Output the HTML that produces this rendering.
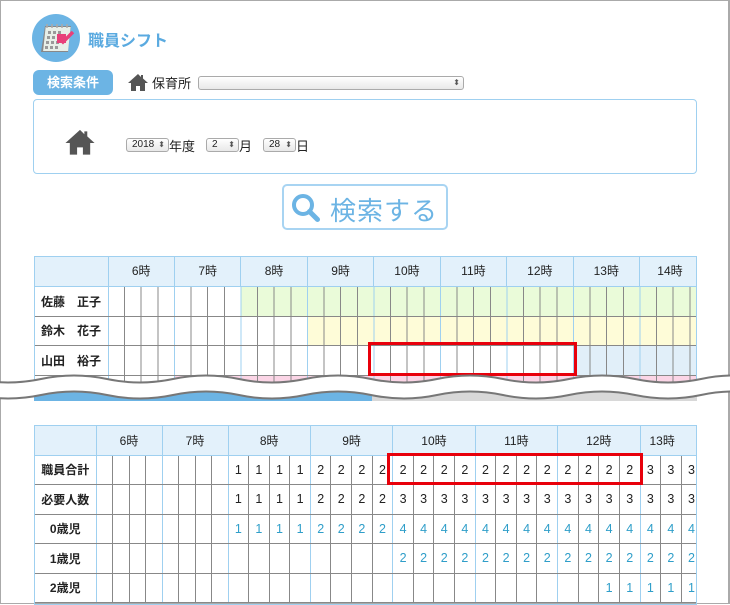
<!DOCTYPE html>
<html><head><meta charset="utf-8">
<style>
*{margin:0;padding:0;box-sizing:border-box}
body{width:730px;height:605px;background:#fff;font-family:"Liberation Sans","Noto Sans CJK JP",sans-serif;position:relative;overflow:hidden;color:#222}
.frame{position:absolute;left:0;top:0;width:730px;height:604px;border:1px solid #aaa;border-right:2px solid #aaa}
.abs{position:absolute}
.sel{position:absolute;height:14px;border:1px solid #aaa;border-radius:3px;background:linear-gradient(#fff,#e8e8e8);font-size:10px;line-height:12px;padding-left:5px;color:#222}
.sel:after{content:"⬍";position:absolute;right:3px;top:0;font-size:8px;color:#555}
table{border-collapse:collapse;table-layout:fixed}
.wrap{position:absolute;overflow:hidden;border:1px solid #9fd0f0}
th{background:#e3f1fb;font-weight:normal;font-size:12px;border-right:1px solid #9fd0f0;border-bottom:1px solid #9fd0f0;color:#222;height:29px}
td{border-bottom:1px solid #888;font-size:12.5px;text-align:center;height:29.5px}
td.n{font-weight:bold;font-size:12px;border-right:1px solid #9fd0f0}
.top td.n{text-align:left;padding-left:6px;letter-spacing:0}
.g{background:
 repeating-linear-gradient(to right,transparent 0 65.5px,#9fd0f0 65.5px 66.5px),
 repeating-linear-gradient(to right,transparent 0 15.6px,#888 15.6px 16.625px)}
.bt td.c{border-right:1px solid #888}
.bt td.h{border-right:1px solid #9fd0f0}
.b{color:#2f9ec9}
</style></head><body>
<div class="frame"></div>

<svg class="abs" style="left:32px;top:14px" width="48" height="48" viewBox="0 0 48 48">
<circle cx="24" cy="24" r="24" fill="#6cb4e4"/>
<polygon points="9,38 13,12 39,12 36,38" fill="#888"/>
<rect x="12" y="13" width="25" height="24" fill="#e8efe8" transform="skewX(-6) translate(3 0)"/>
<g fill="#9a9a9a">
<rect x="16" y="17" width="3" height="3"/><rect x="21" y="17" width="3" height="3"/><rect x="26" y="17" width="3" height="3"/>
<rect x="15" y="22" width="3" height="3"/><rect x="20" y="22" width="3" height="3"/>
<rect x="14" y="27" width="3" height="3"/><rect x="19" y="27" width="3" height="3"/><rect x="24" y="27" width="3" height="3"/>
<rect x="13" y="32" width="3" height="3"/><rect x="18" y="32" width="3" height="3"/><rect x="23" y="32" width="3" height="3"/>
</g>
<path d="M15 10v4M20 10v4M25 10v4M30 10v4M35 10v4" stroke="#aaa" stroke-width="1.5"/>
<rect x="25" y="20" width="9" height="9" fill="#e8407a"/>
<path d="M27 24l4 4 10-10" stroke="#e8407a" stroke-width="3.5" fill="none"/>
</svg>
<div class="abs" style="left:88px;top:27px;font-size:16px;font-weight:bold;color:#5aaae0">職員シフト</div>

<div class="abs" style="left:33px;top:70px;width:80px;height:25px;background:#6cb4e4;border-radius:6px;color:#fff;font-weight:bold;font-size:13px;text-align:center;line-height:25px">検索条件</div>
<svg class="abs" style="left:127px;top:73px" width="22" height="18" viewBox="0 0 22 18"><path d="M11 1L1 10h3v8h5v-5h4v5h5v-8h3L16 5.5V2h-2v2z" fill="#555"/></svg>
<div class="abs" style="left:152px;top:73px;font-size:13px">保育所</div>
<div class="sel" style="left:198px;top:76px;width:266px"></div>

<div class="abs" style="left:33px;top:99px;width:664px;height:75px;border:1px solid #9fd0f0;border-radius:4px"></div>
<svg class="abs" style="left:64px;top:128px" width="32" height="27" viewBox="0 0 22 18"><path d="M11 1L1 10h3v8h5v-5h4v5h5v-8h3L16 5.5V2h-2v2z" fill="#555"/></svg>
<div class="sel" style="left:126px;top:138px;width:43px">2018</div>
<div class="abs" style="left:169px;top:136px;font-size:13px">年度</div>
<div class="sel" style="left:206px;top:138px;width:33px">2</div>
<div class="abs" style="left:239px;top:136px;font-size:13px">月</div>
<div class="sel" style="left:263px;top:138px;width:33px">28</div>
<div class="abs" style="left:296px;top:136px;font-size:13px">日</div>

<div class="abs" style="left:282px;top:184px;width:166px;height:46px;border:2px solid #a8d4f2;border-radius:5px"></div>
<svg class="abs" style="left:290px;top:192px" width="32" height="32" viewBox="0 0 32 32"><circle cx="13" cy="13" r="9" stroke="#6cb4e4" stroke-width="4" fill="none"/><path d="M19.5 19.5l8 8" stroke="#6cb4e4" stroke-width="5" stroke-linecap="round"/></svg>
<div class="abs" style="left:330px;top:191px;font-size:26px;color:#6cb4e4;letter-spacing:1px">検索する</div>

<!-- top table -->
<div class="wrap top" style="left:34px;top:256px;width:663px;height:145px">
<table style="width:665px">
<colgroup><col style="width:73px"><col style="width:592px"></colgroup>
<tr><th></th><th style="padding:0;border-right:0"><div style="display:flex">
<div style="width:66.5px;border-right:1px solid #9fd0f0;line-height:29px">6時</div><div style="width:66.5px;border-right:1px solid #9fd0f0;line-height:29px">7時</div><div style="width:66.5px;border-right:1px solid #9fd0f0;line-height:29px">8時</div><div style="width:66.5px;border-right:1px solid #9fd0f0;line-height:29px">9時</div><div style="width:66.5px;border-right:1px solid #9fd0f0;line-height:29px">10時</div><div style="width:66.5px;border-right:1px solid #9fd0f0;line-height:29px">11時</div><div style="width:66.5px;border-right:1px solid #9fd0f0;line-height:29px">12時</div><div style="width:66.5px;border-right:1px solid #9fd0f0;line-height:29px">13時</div><div style="width:60px;line-height:29px">14時</div></div></th></tr>
<tr><td class="n">佐藤　正子</td><td class="g" style="background-image:repeating-linear-gradient(to right,transparent 0 65.5px,#9fd0f0 65.5px 66.5px),repeating-linear-gradient(to right,transparent 0 15.6px,#888 15.6px 16.625px),linear-gradient(to right,#fff 133px,#eafbd9 133px)"></td></tr>
<tr><td class="n">鈴木　花子</td><td class="g" style="background-image:repeating-linear-gradient(to right,transparent 0 65.5px,#9fd0f0 65.5px 66.5px),repeating-linear-gradient(to right,transparent 0 15.6px,#888 15.6px 16.625px),linear-gradient(to right,#fff 199px,#fefcd8 199px)"></td></tr>
<tr><td class="n">山田　裕子</td><td class="g" style="background-image:repeating-linear-gradient(to right,transparent 0 65.5px,#9fd0f0 65.5px 66.5px),repeating-linear-gradient(to right,transparent 0 15.6px,#888 15.6px 16.625px),linear-gradient(to right,#fff 465px,#e1eff9 465px)"></td></tr>
<tr><td class="n"></td><td class="g" style="background-image:repeating-linear-gradient(to right,transparent 0 65.5px,#9fd0f0 65.5px 66.5px),repeating-linear-gradient(to right,transparent 0 15.6px,#888 15.6px 16.625px),linear-gradient(to right,#fff 66px,#fbd5e6 66px)"></td></tr>
</table>
</div>
<div class="abs" style="left:368px;top:342px;width:209px;height:34px;border:3px solid #e8000b"></div>
<svg class="abs" style="left:0;top:368px" width="730" height="34" viewBox="0 368 730 34">
<rect x="34" y="392" width="338" height="9" fill="#6cb4e4"/>
<rect x="372" y="392" width="325" height="9" fill="#d8d8d8"/>
<path d="M-25,379 Q8,386 41,379 T107,379 T173,379 T239,379 T305,379 T371,379 T437,379 T503,379 T569,379 T635,379 T701,379 T767,379 L767,395 Q734,388 701,395 T635,395 T569,395 T503,395 T437,395 T371,395 T305,395 T239,395 T173,395 T107,395 T41,395 T-25,395 Z" fill="#fff"/>
<path d="M-25,379 Q8,386 41,379 T107,379 T173,379 T239,379 T305,379 T371,379 T437,379 T503,379 T569,379 T635,379 T701,379 T767,379" stroke="#777" stroke-width="2" fill="none"/>
<path d="M-25,395 Q8,402 41,395 T107,395 T173,395 T239,395 T305,395 T371,395 T437,395 T503,395 T569,395 T635,395 T701,395 T767,395" stroke="#777" stroke-width="2" fill="none"/>
</svg>

<!-- bottom table -->
<div class="wrap bt" style="left:34px;top:425px;width:663px;height:180px">
<table style="width:687px">
<colgroup><col style="width:61px">
<col span="8" style="width:16.5px"><col span="24" style="width:20.6px">
</colgroup>
<tr><th></th><th colspan="4">6時</th><th colspan="4">7時</th><th colspan="4">8時</th><th colspan="4">9時</th><th colspan="4">10時</th><th colspan="4">11時</th><th colspan="4">12時</th><th colspan="4" style="text-align:left;padding-left:9px">13時</th></tr>
<tr><td class="n">職員合計</td><td class="c"></td><td class="c"></td><td class="c"></td><td class="h"></td><td class="c"></td><td class="c"></td><td class="c"></td><td class="h"></td><td class="c">1</td><td class="c">1</td><td class="c">1</td><td class="h">1</td><td class="c">2</td><td class="c">2</td><td class="c">2</td><td class="h">2</td><td class="c">2</td><td class="c">2</td><td class="c">2</td><td class="h">2</td><td class="c">2</td><td class="c">2</td><td class="c">2</td><td class="h">2</td><td class="c">2</td><td class="c">2</td><td class="c">2</td><td class="h">2</td><td class="c">3</td><td class="c">3</td><td class="c">3</td><td class="h">3</td></tr>
<tr><td class="n">必要人数</td><td class="c"></td><td class="c"></td><td class="c"></td><td class="h"></td><td class="c"></td><td class="c"></td><td class="c"></td><td class="h"></td><td class="c">1</td><td class="c">1</td><td class="c">1</td><td class="h">1</td><td class="c">2</td><td class="c">2</td><td class="c">2</td><td class="h">2</td><td class="c">3</td><td class="c">3</td><td class="c">3</td><td class="h">3</td><td class="c">3</td><td class="c">3</td><td class="c">3</td><td class="h">3</td><td class="c">3</td><td class="c">3</td><td class="c">3</td><td class="h">3</td><td class="c">3</td><td class="c">3</td><td class="c">3</td><td class="h">3</td></tr>
<tr class="b"><td class="n" style="color:#222">0歳児</td><td class="c"></td><td class="c"></td><td class="c"></td><td class="h"></td><td class="c"></td><td class="c"></td><td class="c"></td><td class="h"></td><td class="c">1</td><td class="c">1</td><td class="c">1</td><td class="h">1</td><td class="c">2</td><td class="c">2</td><td class="c">2</td><td class="h">2</td><td class="c">4</td><td class="c">4</td><td class="c">4</td><td class="h">4</td><td class="c">4</td><td class="c">4</td><td class="c">4</td><td class="h">4</td><td class="c">4</td><td class="c">4</td><td class="c">4</td><td class="h">4</td><td class="c">4</td><td class="c">4</td><td class="c">4</td><td class="h">4</td></tr>
<tr class="b"><td class="n" style="color:#222">1歳児</td><td class="c"></td><td class="c"></td><td class="c"></td><td class="h"></td><td class="c"></td><td class="c"></td><td class="c"></td><td class="h"></td><td class="c"></td><td class="c"></td><td class="c"></td><td class="h"></td><td class="c"></td><td class="c"></td><td class="c"></td><td class="h"></td><td class="c">2</td><td class="c">2</td><td class="c">2</td><td class="h">2</td><td class="c">2</td><td class="c">2</td><td class="c">2</td><td class="h">2</td><td class="c">2</td><td class="c">2</td><td class="c">2</td><td class="h">2</td><td class="c">2</td><td class="c">2</td><td class="c">2</td><td class="h">2</td></tr>
<tr class="b"><td class="n" style="color:#222">2歳児</td><td class="c"></td><td class="c"></td><td class="c"></td><td class="h"></td><td class="c"></td><td class="c"></td><td class="c"></td><td class="h"></td><td class="c"></td><td class="c"></td><td class="c"></td><td class="h"></td><td class="c"></td><td class="c"></td><td class="c"></td><td class="h"></td><td class="c"></td><td class="c"></td><td class="c"></td><td class="h"></td><td class="c"></td><td class="c"></td><td class="c"></td><td class="h"></td><td class="c"></td><td class="c"></td><td class="c">1</td><td class="h">1</td><td class="c">1</td><td class="c">1</td><td class="c">1</td><td class="h">1</td></tr>
</table>
</div>
<div class="abs" style="left:387px;top:453px;width:256px;height:32px;border:3px solid #e8000b"></div>
</body></html>
